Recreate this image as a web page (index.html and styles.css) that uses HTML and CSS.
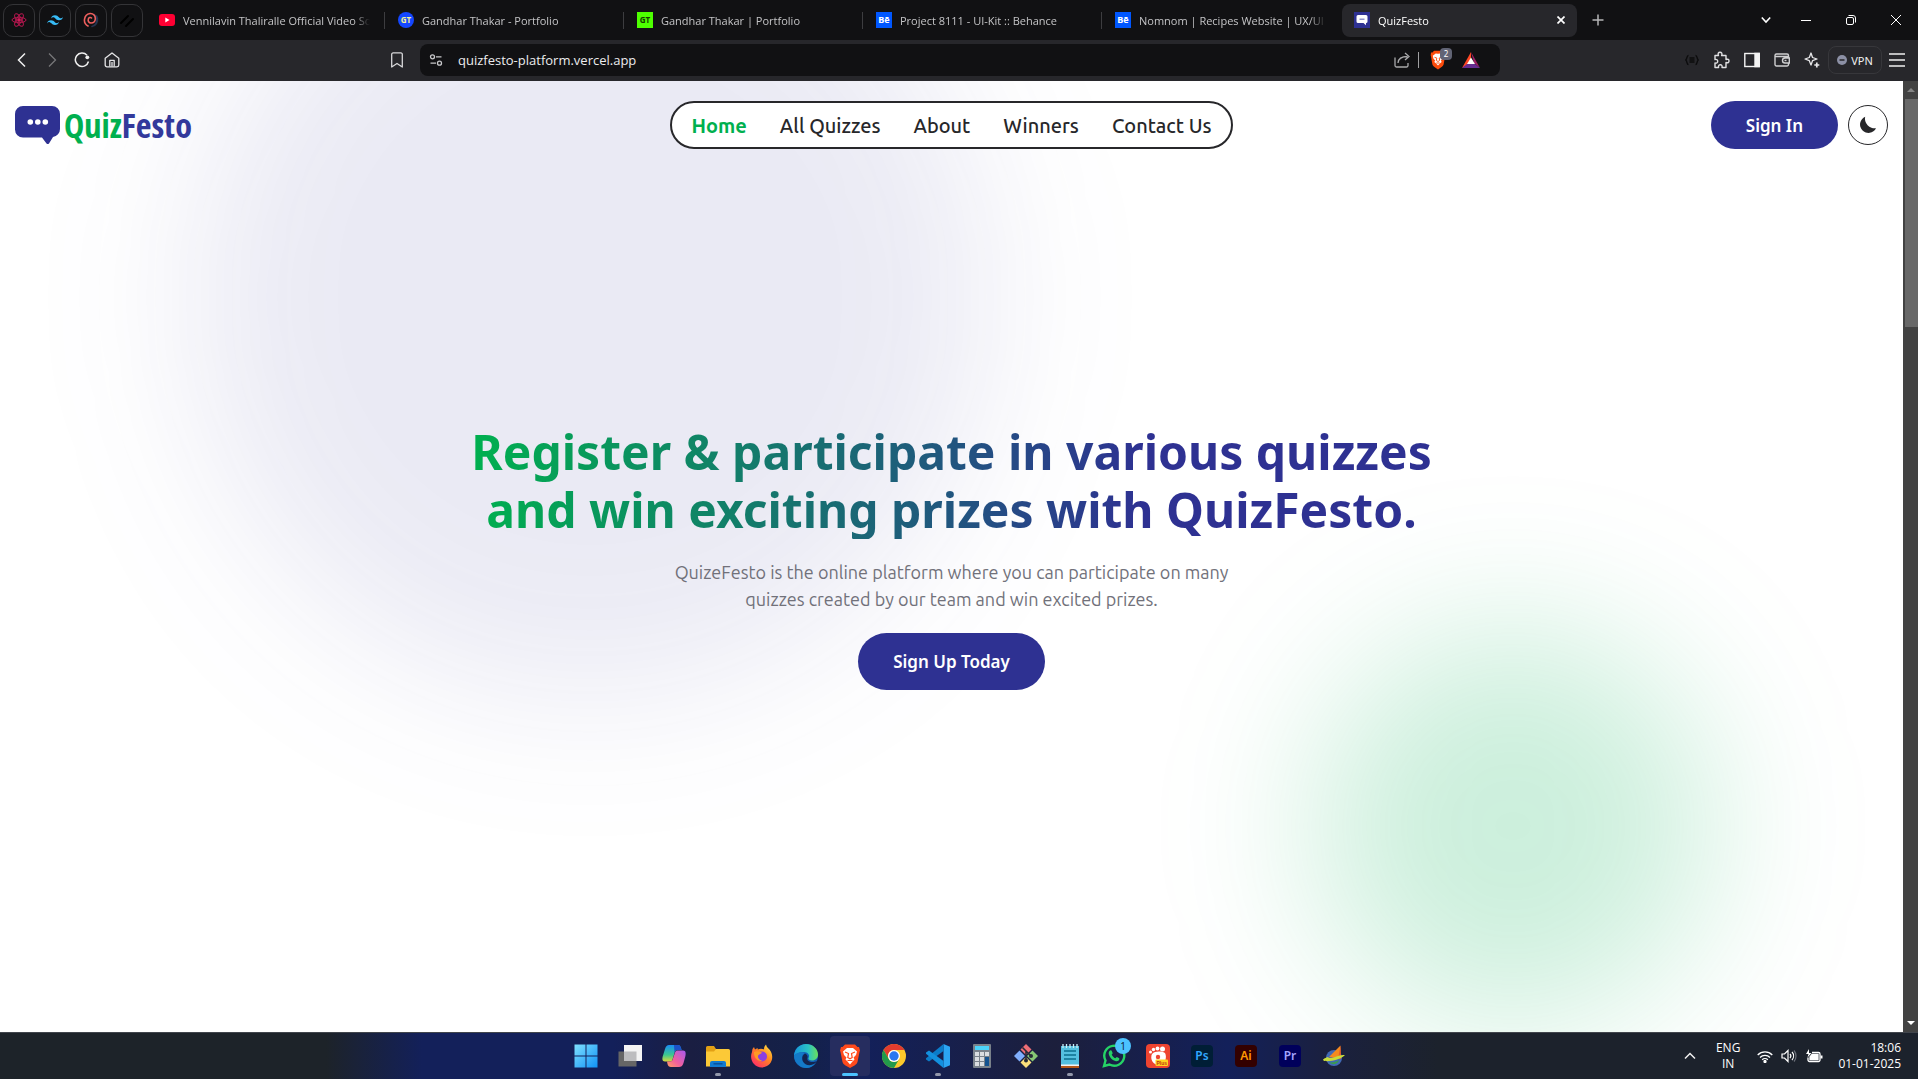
FILE: index.html
```html
<!DOCTYPE html>
<html lang="en">
<head>
<meta charset="utf-8">
<meta name="viewport" content="width=device-width, initial-scale=1">
<title>QuizFesto</title>
<link rel="stylesheet" href="styles.css">
</head>
<body>
<div class="tabstrip">
  <button class="pin" aria-label="React Icons"><svg width="16" height="16" viewBox="0 0 16 16" fill="none" stroke="#b5174f" stroke-width="1"><ellipse cx="8" cy="8" rx="7" ry="2.7"/><ellipse cx="8" cy="8" rx="7" ry="2.7" transform="rotate(60 8 8)"/><ellipse cx="8" cy="8" rx="7" ry="2.7" transform="rotate(120 8 8)"/><circle cx="8" cy="8" r="1.4" fill="#e91e63"/></svg></button>
  <button class="pin" aria-label="Tailwind CSS"><svg width="16" height="16" viewBox="0 0 24 24" fill="#38bdf8"><path d="M12 5c-3.200 0-5.200 1.600-6 4.800 1.200-1.600 2.600-2.200 4.200-1.800.9.200 1.600.9 2.300 1.700C13.700 10.900 15.100 12.300 18 12.300c3.200 0 5.200-1.600 6-4.800-1.200 1.600-2.600 2.200-4.200 1.800-.9-.2-1.600-.9-2.300-1.700C16.300 6.400 14.900 5 12 5zM6 12.300c-3.200 0-5.200 1.600-6 4.800 1.200-1.600 2.600-2.200 4.200-1.800.9.200 1.600.9 2.300 1.700C7.700 18.200 9.100 19.600 12 19.600c3.200 0 5.200-1.600 6-4.800-1.200 1.600-2.600 2.200-4.200 1.800-.9-.2-1.600-.9-2.300-1.700C10.300 13.700 8.900 12.300 6 12.300z"/></svg></button>
  <button class="pin" aria-label="Swirl"><svg width="16" height="16" viewBox="0 0 16 16" fill="none" stroke-width="1.600" stroke-linecap="round"><path d="M9 14.500A6.800 6.800 0 0 0 11 2.500M13.500 4a7 7 0 0 1-2 9.500" stroke="#26344f"/><path d="M5 14A6.700 6.700 0 0 1 7 1.500c3.500-.2 5.500 2.500 5.300 5.500-.2 2.500-2 4-4.300 4-2.200-.2-3.200-2-2.700-3.800C5.700 5.500 7.500 5 8.500 6" stroke="#f0605f"/></svg></button>
  <button class="pin" aria-label="Shadcn UI"><svg width="16" height="16" viewBox="0 0 16 16" stroke="#000" stroke-width="2" stroke-linecap="round"><path d="M2 11l7-7M7 14l7-7"/></svg></button>
  <div class="tabs">
    <a class="tab" href="#"><svg width="16" height="16" viewBox="0 0 16 16"><rect y="2" width="16" height="12" rx="3" fill="#ff0033"/><path d="M6.300 5.500v5l4.200-2.500z" fill="#fff"/></svg><span class="tab-title">Vennilavin Thaliralle Official Video Song</span></a>
    <a class="tab" href="#"><span class="fav fav-round">GT</span><span class="tab-title">Gandhar Thakar - Portfolio</span></a>
    <a class="tab" href="#"><span class="fav fav-green">GT</span><span class="tab-title">Gandhar Thakar | Portfolio</span></a>
    <a class="tab" href="#"><span class="fav fav-be">Bē</span><span class="tab-title">Project 8111 - UI-Kit :: Behance</span></a>
    <a class="tab" href="#"><span class="fav fav-be">Bē</span><span class="tab-title">Nomnom | Recipes Website | UX/UI Design</span></a>
    <a class="tab tab-active" href="#"><svg width="16" height="16" viewBox="0 0 16 16"><rect width="16" height="16" fill="#2e3192"/><path d="M4 3h8a1.500 1.500 0 0 1 1.500 1.500v5A1.500 1.500 0 0 1 12 11v2.200L9.500 11H4a1.500 1.500 0 0 1-1.500-1.500v-5A1.500 1.500 0 0 1 4 3z" fill="#fff"/><path d="M5.500 7.200h5" stroke="#7779bd" stroke-width="1.200"/></svg><span class="tab-title">QuizFesto</span><svg width="8" height="8" viewBox="0 0 8 8" stroke="#fff" stroke-width="1.700"><path d="M.5.500l7 7M7.500.500l-7 7"/></svg></a>
  </div>
  <button class="plain new-tab" aria-label="New tab"><svg width="12" height="12" viewBox="0 0 12 12" stroke="#b5b5b7" stroke-width="1.500"><path d="M6 .5v11M.5 6h11"/></svg></button>
  <div class="window-controls">
    <button class="plain caret" aria-label="Search tabs"><svg width="10" height="8" viewBox="0 0 10 8" fill="none" stroke="#fff" stroke-width="1.600"><path d="M.8 1.500L5 6l4.200-4.500"/></svg></button>
    <button class="plain win" aria-label="Minimise"><svg width="10" height="10" viewBox="0 0 10 10"><path d="M0 5.500h10" stroke="#fff"/></svg></button>
    <button class="plain win" aria-label="Restore"><svg width="10" height="10" viewBox="0 0 10 10" fill="none" stroke="#fff"><rect x=".5" y="2.500" width="7" height="7" rx="1.500"/><path d="M2.500.500H7A2.500 2.500 0 0 1 9.500 3v4.500"/></svg></button>
    <button class="plain win" aria-label="Close"><svg width="10" height="10" viewBox="0 0 10 10" stroke="#fff"><path d="M0 0l10 10M10 0L0 10"/></svg></button>
  </div>
</div>

<div class="toolbar">
  <div class="tools">
    <button class="plain tool" aria-label="Back"><svg width="16" height="16" viewBox="0 0 16 16" fill="none" stroke="#f0f0f0" stroke-width="1.500"><path d="M11 1.500L4.500 8l6.500 6.500"/></svg></button>
    <button class="plain tool" aria-label="Forward"><svg width="16" height="16" viewBox="0 0 16 16" fill="none" stroke="#77777a" stroke-width="1.300"><path d="M5 1.500L11.500 8 5 14.500"/></svg></button>
    <button class="plain tool" aria-label="Reload"><svg width="16" height="16" viewBox="0 0 16 16" fill="none" stroke="#f0f0f0" stroke-width="1.500"><path d="M13 3.200A6.700 6.700 0 1 0 14.500 9.500"/><circle cx="13.300" cy="5.300" r="1.900" fill="#f0f0f0" stroke="none"/></svg></button>
    <button class="plain tool" aria-label="Home"><svg width="16" height="16" viewBox="0 0 16 16" fill="none" stroke="#e4e4e6" stroke-width="1.300" stroke-linejoin="round"><path d="M1.200 6.300L8 1l6.800 5.300V13a1.800 1.800 0 0 1-1.800 1.800H3A1.800 1.800 0 0 1 1.200 13z"/><path d="M5.800 14.500V8.300h4.400v6.200M8 10v4.500"/></svg></button>
    <button class="plain tool tool-end" aria-label="Bookmark"><svg width="16" height="16" viewBox="0 0 16 16" fill="none" stroke="#d8d8da" stroke-width="1.300" stroke-linejoin="round"><path d="M2.700 2.500A1.500 1.500 0 0 1 4.200.8h7.600a1.500 1.500 0 0 1 1.500 1.700V15L8 11.500 2.700 15z"/></svg></button>
  </div>
  <div class="omnibox">
    <svg width="14" height="14" viewBox="0 0 14 14" fill="none" stroke="#c8c8ca" stroke-width="1.300"><circle cx="3.500" cy="3.800" r="2"/><path d="M7 3.800h5.500M1.500 10.200H7"/><circle cx="10.500" cy="10.200" r="2"/></svg>
    <input class="url" type="text" aria-label="Address" value="quizfesto-platform.vercel.app">
    <svg width="16" height="16" viewBox="0 0 16 16" fill="none" stroke="#a9a9ab" stroke-width="1.300"><path d="M1 5.500v8a1.500 1.500 0 0 0 1.500 1.500h10a1.500 1.500 0 0 0 1.500-1.500V11M4 11c.3-4.500 3-6.500 9.500-6.500M11 1l4 3.500L11 8"/></svg>
    <span class="divider"></span>
    <span class="shield"><svg width="16" height="20" viewBox="0 0 16 20"><path d="M4 .8h8l1.500 1.700 1.500 0 .3 3-.3 1-1.400 8c-.3 1-1 1.700-1.700 2.300L8 19.500l-3.900-2.700c-.7-.6-1.400-1.300-1.700-2.300L1 6.500l-.3-1 .3-3h1.500z" fill="#fb4b0b"/><path d="M8 3.800l2.300-.4 2.900 2.400-.6 2.700-1.700 2 .8 1.500-1.600 1.300L8 15.500l-2.100-2.200L4.300 12l.8-1.500-1.700-2-.6-2.700 2.900-2.400z" fill="#fff"/><path d="M4.500 7.300l2.300.7-.5 2.500L8 11.500l1.700-1-.5-2.500 2.300-.7M6.300 13h3.400" fill="none" stroke="#fb4b0b" stroke-width=".9"/></svg><span class="shield-count">2</span></span>
    <svg width="18" height="16" viewBox="0 0 18 16"><path d="M9 0L0 16l9-5z" fill="#ff4724"/><path d="M9 0l9 16-6-5z" fill="#9e1f63"/><path d="M0 16h18l-5-4H5z" fill="#662d91"/><path d="M9 5.500l4 6.500H5z" fill="#fff"/></svg>
  </div>
  <div class="extensions">
    <button class="plain tool" aria-label="JSON viewer"><svg width="14" height="12" viewBox="0 0 14 12" fill="none" stroke="#0c0c0d" stroke-width="1.400"><path d="M3.500 1.500c-2 0-1 3-2.700 4.500 1.700 1.500.7 4.500 2.700 4.500M10.500 1.500c2 0 1 3 2.700 4.500-1.700 1.500-.7 4.500-2.700 4.500M4.500 4h5M4.500 6h5M4.500 8h5"/></svg></button>
    <button class="plain tool" aria-label="Extensions"><svg width="18" height="18" viewBox="0 0 18 18" fill="none" stroke="#e0e0e2" stroke-width="1.400" stroke-linejoin="round"><path d="M2 4.500h3.500C4.500 2.500 5.500 1.200 7 1.200s2.600 1.300 1.600 3.300H13v4c2-.8 3 .2 3 1.500s-1 2.300-3 1.500v5H9c.5-2-.5-2.800-1.700-2.800s-2.200.8-1.700 2.800H2V12c1.800.5 2.700-.6 2.700-1.800S3.800 8 2 8.500z"/></svg></button>
    <button class="plain tool" aria-label="Sidebar"><svg width="16" height="16" viewBox="0 0 16 16" fill="none" stroke="#f4f4f4" stroke-width="1.400"><rect x=".8" y="1.500" width="14.400" height="13"/><path d="M11 1.500h4.200v13H11z" fill="#f4f4f4"/></svg></button>
    <button class="plain tool" aria-label="Wallet"><svg width="16" height="16" viewBox="0 0 16 16" fill="none" stroke="#cfcfd1" stroke-width="1.400"><path d="M14.500 6V3.500A1.500 1.500 0 0 0 13 2H2.500A1.500 1.500 0 0 0 1 3.500v9A1.500 1.500 0 0 0 2.500 14H13a1.500 1.500 0 0 0 1.500-1.500V11M1.500 4.500h13M15.300 6H11a2.500 2.500 0 0 0 0 5h4.300z"/><path d="M10.500 8.500h2"/></svg></button>
    <button class="plain tool" aria-label="Leo AI"><svg width="16" height="16" viewBox="0 0 16 16" fill="none" stroke="#e6e6e8" stroke-width="1.300" stroke-linejoin="round"><path d="M7 1l1.500 4.500L13 7 8.500 8.700 7 13 5.300 8.700 1 7l4.300-1.500z"/><path d="M12.800 10.500v5M10.300 13h5" stroke-width="1.700"/></svg></button>
    <button class="plain vpn"><svg width="10" height="10" viewBox="0 0 10 10"><circle cx="5" cy="5" r="5" fill="#8c90a5"/><path d="M2.500 5h5" stroke="#26262a" stroke-width="1.500"/></svg>VPN</button>
    <button class="plain tool" aria-label="Menu"><svg width="16" height="14" viewBox="0 0 16 14" stroke="#f0f0f0" stroke-width="1.400"><path d="M0 1h16M0 7h16M0 13h16"/></svg></button>
  </div>
</div>

<div class="viewport">
  <div class="page">
    <div class="glow glow-indigo"></div>
    <div class="glow glow-green"></div>
    <header class="site-header">
      <a class="logo" href="#"><svg width="46" height="38" viewBox="0 0 46 38"><path d="M8 0h29a8 8 0 0 1 8 8v15a8 8 0 0 1-7 8l-4 6.500q-1.200 1-2.500 0L27 31.500H8a8 8 0 0 1-8-8V8a8 8 0 0 1 8-8z" fill="#2e3192"/><g fill="#fff"><circle cx="15.300" cy="16" r="2.800"/><circle cx="22.800" cy="16" r="2.800"/><circle cx="30.300" cy="16" r="2.800"/></g></svg><span class="wordmark"><span class="wordmark-quiz">Quiz</span>Festo</span></a>
      <nav class="site-nav">
        <a class="current" href="#">Home</a>
        <a href="#">All Quizzes</a>
        <a href="#">About</a>
        <a href="#">Winners</a>
        <a href="#">Contact Us</a>
      </nav>
      <div class="account">
        <button class="btn btn-header">Sign In</button>
        <button class="theme" aria-label="Dark mode"><svg width="18" height="18" viewBox="0 0 18 18"><path d="M6.200.8A8.400 8.400 0 1 0 17 12.200 9.500 9.500 0 0 1 6.200.8z" fill="#27272a"/></svg></button>
      </div>
    </header>
    <main class="hero">
      <h1>Register &amp; participate in various quizzes<br>and win exciting prizes with QuizFesto.</h1>
      <p>QuizeFesto is the online platform where you can participate on many<br>quizzes created by our team and win excited prizes.</p>
      <button class="btn btn-hero">Sign Up Today</button>
    </main>
  </div>
  <div class="scrollbar">
    <svg class="arrow" width="15" height="18" viewBox="0 0 15 18"><path d="M8 7l4 4H4z" fill="#858585"/></svg>
    <span class="thumb"></span>
    <svg class="arrow arrow-end" width="15" height="18" viewBox="0 0 15 18"><path d="M4 7h8l-4 4z" fill="#fff"/></svg>
  </div>
</div>

<div class="taskbar">
  <div class="apps">
    <button class="app" aria-label="Start"><svg width="24" height="24" viewBox="0 0 24 24"><defs><linearGradient id="win" x1="0" y1="0" x2="1" y2="1"><stop offset="0" stop-color="#7fe0ff"/><stop offset="1" stop-color="#1092f5"/></linearGradient></defs><path d="M.5.500h11v11H.5zM12.500.500h11v11h-11zM.5 12.500h11v11H.5zM12.500 12.500h11v11h-11z" fill="url(#win)"/></svg></button>
    <button class="app" aria-label="Task view"><svg width="24" height="24" viewBox="0 0 24 24"><path d="M.5 7.500h18v15H.5z" fill="#666"/><path d="M6 1h18v16H6z" fill="#f4f4f4"/><path d="M6 7.500h12.500V17H6z" fill="#bdbdbf"/></svg></button>
    <button class="app" aria-label="Copilot"><svg width="24" height="24" viewBox="0 0 24 24"><defs><linearGradient id="cpa" x1="0" y1="0" x2="0" y2="1"><stop offset="0" stop-color="#1a8cf5"/><stop offset=".6" stop-color="#3cc78f"/><stop offset="1" stop-color="#d8d83c"/></linearGradient><linearGradient id="cpb" x1="1" y1="0" x2="0" y2="1"><stop offset="0" stop-color="#a858ee"/><stop offset=".6" stop-color="#f0609c"/><stop offset="1" stop-color="#ffa060"/></linearGradient></defs><path d="M7 1h9c2 0 2.500 1.500 3 3l.5 2h-4c-2 0-2.500 1-3 3l-2 6.500c-.5 1.500-1 2-3 2H3c-3 0-3-3-2-6L3 5c1-3 2-4 4-4z" fill="url(#cpa)"/><path d="M12 1h4c2 0 2.500 1.500 3 3l.5 2h-4c-1.500 0-2.500 0-3 3z" fill="#1c52c9"/><path d="M17 23H9c-2 0-3-1-3.500-3L5 17.500h3c2 0 2.500-1 3-3L13 8.500c.5-1.500 1.500-2 3-2h5c3 0 3 3 2.300 6L21.500 19c-1 3-2.500 4-4.500 4z" fill="url(#cpb)"/></svg></button>
    <button class="app app-open" aria-label="File Explorer"><svg width="24" height="24" viewBox="0 0 24 24"><path d="M0 3.500A1.500 1.500 0 0 1 1.500 2H8l2 3v4H0z" fill="#e2a015"/><path d="M0 7.500h8l2-2.500h12.500A1.500 1.500 0 0 1 24 6.500v16H0z" fill="#fcc937"/><path d="M4 23v-4a2 2 0 0 1 2-2h12a2 2 0 0 1 2 2v4z" fill="#117ad1"/><path d="M7.500 19.800h9" stroke="#0a4b94" stroke-width="1.300"/></svg></button>
    <button class="app" aria-label="Firefox"><svg width="24" height="24" viewBox="0 0 24 24"><defs><linearGradient id="ff" x1="1" y1="0" x2=".2" y2="1"><stop offset="0" stop-color="#fff24a"/><stop offset=".45" stop-color="#ff8a1f"/><stop offset="1" stop-color="#ff2a6a"/></linearGradient></defs><path d="M2.500 5L4 3l1 2.500L7.500 4l.3 1.500C10 4.500 12 4.500 14 5.500c0-2 .5-3.500 2-5 .5 3 3 4 4.500 6.500 4 6.500 1 16-8.500 16.500C3.500 23.500-1 15 2 8z" fill="url(#ff)"/><circle cx="12" cy="12.500" r="5" fill="#8a3fe0"/><path d="M4 8c3-2 6 0 8 .5-1 2-4 1.500-4 4 0 2.500 2.500 4 5 4-5 2-9.500-3-9-8.500z" fill="#ff9a24"/></svg></button>
    <button class="app" aria-label="Edge"><svg width="24" height="24" viewBox="0 0 24 24"><defs><linearGradient id="edge" x1="0" y1=".5" x2="1" y2=".5"><stop offset="0" stop-color="#1695dc"/><stop offset=".6" stop-color="#2bc4c4"/><stop offset="1" stop-color="#6be05a"/></linearGradient></defs><circle cx="12" cy="12" r="12" fill="#1260b5"/><path d="M0 11.500C.5 5 5.500 0 12 0c7 0 12 5 12 10.500 0 3.500-2.500 6-6 6-2.500 0-4-1-3.500-2.500 2-3-1-6-4.500-6-5 0-8 2-10 3.500z" fill="url(#edge)"/><path d="M0 11.500C3 8 8 7.500 11 9c-3 1-4 5-2 8.500 2 4 7 4.500 12.500 1.500-4 6-12 6.500-17 2C1.500 18.500 0 15 0 11.500z" fill="#147ac8"/><path d="M9 17.500C7.500 14 8.500 11 11 9.500c2 1 3 2.500 2.500 4.500-1 2 1.500 4 5 4 2 0 3.500-.5 5-1.500C20 22.500 11.500 22.500 9 17.500z" fill="#14254f"/></svg></button>
    <button class="app app-open app-focused" aria-label="Brave"><svg width="22" height="24" viewBox="0 0 22 24"><path d="M6 .5h10L18.500 3H20l1 3.500-.5 1.500-2 10c-.5 1.500-1.500 2.500-2.500 3.200L11 24l-5-2.800C5 20.500 4 19.500 3.500 18l-2-10L1 6.500 2 3h1.500z" fill="#ff4a1c"/><path d="M8 4h6l4 3.500-1 3.500-2.500 2.500 1 2-2 2-2.500 3-2.500-3-2-2 1-2L5 11 4 7.500z" fill="#fff"/><path d="M6 8l3.500 1.500-.7 4 2.200 1.200 2.200-1.200-.7-4L16 8M8.500 16.500h5" fill="none" stroke="#ff4a1c" stroke-width="1.200"/></svg></button>
    <button class="app" aria-label="Chrome"><svg width="24" height="24" viewBox="0 0 24 24"><circle cx="12" cy="12" r="12" fill="#fcc92b"/><path d="M1.600 6A12 12 0 0 1 22.400 6H12a6 6 0 0 0-5.200 9z" fill="#e23b2e"/><path d="M1.600 6A12 12 0 0 0 12 24l5.200-9A6 6 0 0 1 6.800 15z" fill="#229a4b"/><circle cx="12" cy="12" r="6" fill="#fff"/><circle cx="12" cy="12" r="4.700" fill="#2a78f0"/></svg></button>
    <button class="app app-open" aria-label="Visual Studio Code"><svg width="24" height="24" viewBox="0 0 24 24"><path d="M17.500 0L24 2.800v18.400L17.500 24z" fill="#2ba5f2"/><path d="M17.500 0v7L3 17.500 0 15.500v-1.200z" fill="#0b7cc9"/><path d="M17.500 24v-7L3 6.500 0 8.500v1.200z" fill="#1390de"/></svg></button>
    <button class="app" aria-label="Calculator"><svg width="18" height="24" viewBox="0 0 18 24"><rect width="18" height="24" rx="1" fill="#79818a"/><path d="M2 2h14v4H2z" fill="#4cd3fa"/><path d="M2 8h4v4H2zM7 8h4v4H7zM12 8h4v4h-4zM2 13h4v4H2zM7 13h4v4H7zM2 18h4v4H2zM7 18h4v4H7z" fill="#dadde0"/><path d="M12 13h4v9h-4z" fill="#14528f"/></svg></button>
    <button class="app" aria-label="Git"><svg width="24" height="24" viewBox="0 0 24 24"><path d="M12 0l5.500 5.500L12 11 6.500 5.500z" fill="#ee6d75"/><path d="M5.500 6.500L11 12l-5.500 5.500L0 12z" fill="#80aefc"/><path d="M18.500 6.500L24 12l-5.500 5.500L13 12z" fill="#86c774"/><path d="M12 13l5.500 5.500L12 24l-5.500-5.500z" fill="#fbdf7b"/><path d="M8.500 3.500L12 7v9M12 7l4.500 4.500" fill="none" stroke="#262b36" stroke-width="1.600"/><circle cx="12" cy="16.500" r="2" fill="#262b36"/><circle cx="17" cy="12" r="2" fill="#262b36"/></svg></button>
    <button class="app app-open" aria-label="Notepad"><svg width="20" height="24" viewBox="0 0 20 24"><path d="M1 21h18v3H1z" fill="#b5591a"/><path d="M1 20h18v2H1z" fill="#f4f4f4"/><path d="M1 2h18v18.500H1z" fill="#54c0e0"/><path d="M3 0v4M6.500 0v4M10 0v4M13.500 0v4M17 0v4" stroke="#c8eef8" stroke-width="1.300"/><path d="M4 7h12M4 11h12M4 15h12" stroke="#0b6f8f" stroke-width="1.600"/></svg></button>
    <button class="app" aria-label="WhatsApp"><svg width="24" height="24" viewBox="0 0 24 24"><path d="M2 22l1.500-5.500a10 10 0 1 1 4 4z" fill="none" stroke="#25d366" stroke-width="2.400"/><path d="M7.500 7c1-1 2-.8 2.500.5l.7 1.700-1 1.500c.8 1.600 2 2.800 3.600 3.500l1.500-1.200 2.500 1.200c.5 2-1.500 3.300-3.300 3C10.500 16.500 7 13 6.700 9.500c0-1 .3-2 .8-2.500z" fill="#25d366"/></svg><span class="badge">1</span></button>
    <button class="app" aria-label="GOM Player Plus"><svg width="24" height="24" viewBox="0 0 24 24"><rect width="24" height="24" rx="4" fill="#ee4430"/><g fill="#fff"><circle cx="4.500" cy="8" r="1.500"/><circle cx="7.500" cy="5.500" r="1.700"/><circle cx="11.500" cy="4.500" r="1.900"/><circle cx="16.500" cy="5" r="2.500"/><path d="M6 10c3-3 9-3 13-1 2 3 1 12-6 12S4 14 6 10z"/></g><circle cx="12" cy="13" r="2.200" fill="#ee4430"/><rect x="9.500" y="15.500" width="12.500" height="6.500" rx="1" fill="#ffd21f"/><text x="10.500" y="21" font-family="Liberation Sans" font-size="5" font-weight="700" fill="#c23a10">Plus</text></svg></button>
    <button class="app" aria-label="Photoshop"><span class="adobe adobe-ps">Ps</span></button>
    <button class="app" aria-label="Illustrator"><span class="adobe adobe-ai">Ai</span></button>
    <button class="app" aria-label="Premiere Pro"><span class="adobe adobe-pr">Pr</span></button>
    <button class="app" aria-label="Download Manager"><svg width="24" height="24" viewBox="0 0 24 24"><circle cx="12" cy="14" r="8" fill="#4169b5"/><path d="M18.500 1.500L7 13l11.500 2z" fill="#f58a1f"/><path d="M18.500 1.500L16 15h3z" fill="#e65a2a"/><path d="M1 16c2 3 18 0 22-5-1 0-5 0-7 1-5 2-9 3-10 1-2 .5-5 2-5 3z" fill="#c9dc3a"/><path d="M7 18c3 1 7 0 10-2-1 4-6 6-10 2z" fill="#3a9c4c"/></svg></button>
  </div>
  <div class="tray">
    <svg class="tray-caret" width="12" height="8" viewBox="0 0 12 8" fill="none" stroke="#f0f0f0" stroke-width="1.500"><path d="M1 6.500l5-5 5 5"/></svg>
    <div class="language">ENG<br>IN</div>
    <div class="status">
      <svg width="16" height="13" viewBox="0 0 16 13" fill="none" stroke="#fff" stroke-width="1.300"><path d="M.7 5a10.300 10.300 0 0 1 14.600 0M3 7.500a7.100 7.100 0 0 1 10 0M5.200 9.800a4 4 0 0 1 5.600 0"/><circle cx="8" cy="11.500" r="1" fill="#fff"/></svg>
      <svg width="16" height="14" viewBox="0 0 16 14" fill="none" stroke="#fff" stroke-width="1.200"><path d="M1 5h2.500L7 1.500v11L3.500 9H1zM9 5a3 3 0 0 1 0 4M11 3a6 6 0 0 1 0 8"/><path d="M13 1.500a8.500 8.500 0 0 1 0 11" stroke="#6a6f78"/></svg>
      <svg width="18" height="14" viewBox="0 0 18 14" fill="none" stroke="#fff" stroke-width="1.300"><path d="M7 3.500h6.500A1.500 1.500 0 0 1 15 5v6a1.500 1.500 0 0 1-1.500 1.500h-9A1.500 1.500 0 0 1 3 11V8.500"/><path d="M7 5.500h6v5H5V8z" fill="#fff"/><path d="M16.500 6.500v3" stroke-width="2"/><path d="M4 0L1 5h2.500L2.500 8.500 6.500 4H4z" fill="#fff" stroke="none"/></svg>
    </div>
    <div class="clock">18:06<br>01-01-2025</div>
  </div>
</div>
</body>
</html>
```
FILE: styles.css
```css
* { box-sizing: border-box; }

body {
  margin: 0;
  min-height: 100vh;
  display: flex;
  flex-direction: column;
  font-family: "Noto Sans", sans-serif;
  background: #fff;
  color: #27272a;
}

a { color: inherit; text-decoration: none; }
button { font: inherit; color: inherit; cursor: pointer; padding: 0; }
svg { display: block; flex: none; }

.plain {
  border: 0;
  background: none;
  display: flex;
  align-items: center;
  justify-content: center;
}

/* Browser tabs */
.tabstrip {
  display: flex;
  align-items: center;
  gap: 4px;
  height: 40px;
  padding-left: 3px;
  background: #111113;
  font-family: "Open Sans", sans-serif;
  font-size: 11px;
}
.pin {
  flex: none;
  width: 32px;
  height: 33px;
  display: grid;
  place-items: center;
  border: 1px solid #343437;
  border-radius: 10px;
  background: none;
}
.tabs {
  flex: 0 1 1430px;
  min-width: 0;
  display: flex;
  gap: 4px;
}
.tab {
  position: relative;
  flex: 1 1 0;
  min-width: 0;
  height: 33px;
  display: flex;
  align-items: center;
  gap: 8px;
  padding: 0 12px;
  border-radius: 8px;
  color: #c4c4c6;
}
.tab:nth-child(-n+4)::after {
  content: "";
  position: absolute;
  right: -3px;
  top: 8px;
  width: 1px;
  height: 17px;
  background: #3d3d40;
}
.tab-active { background: #27272b; color: #fff; }
.tab-title {
  flex: 1;
  overflow: hidden;
  white-space: nowrap;
  mask-image: linear-gradient(to left, transparent, #000 16px);
}
.fav {
  flex: none;
  width: 16px;
  height: 16px;
  font-size: 8px;
  line-height: 16px;
  font-weight: 700;
  text-align: center;
}
.fav-round { border-radius: 50%; background: #1447ff; color: #f2f296; }
.fav-green { background: #4dff00; color: #133a00; }
.fav-be { background: #0057ff; color: #fff; font-size: 9px; }
.new-tab { width: 34px; height: 33px; }
.window-controls { display: flex; margin-left: auto; }
.caret { width: 34px; height: 40px; }
.win { width: 45px; height: 40px; }

/* Browser toolbar */
.toolbar {
  display: grid;
  grid-template-columns: 1fr minmax(0, 1080px) 1fr;
  align-items: center;
  height: 41px;
  padding: 0 0 1px 2px;
  background: #27272b;
}
.tools, .extensions { display: flex; align-items: center; }
.tools { padding: 0 8px 0 5px; }
.tool { width: 30px; height: 32px; }
.tool-end { margin-left: auto; }
.extensions { justify-content: flex-end; padding-right: 6px; }
.vpn {
  width: 54px;
  height: 28px;
  margin-left: 1px;
  gap: 4px;
  border: 1px solid #37373b;
  border-radius: 8px;
  color: #f0f0f0;
  font-size: 11px;
}
.omnibox {
  height: 32px;
  display: flex;
  align-items: center;
  gap: 8px;
  padding: 0 20px 0 9px;
  border-radius: 8px;
  background: #111113;
}
.url {
  flex: 1;
  min-width: 0;
  padding: 0 0 0 7px;
  border: 0;
  background: none;
  color: #ececee;
  font: 13px "Open Sans", sans-serif;
}
.divider { width: 1px; height: 16px; background: #a0a0a2; }
.shield { position: relative; margin: 0 8px 0 3px; }
.shield-count {
  position: absolute;
  left: 10px;
  top: -2px;
  width: 12px;
  height: 12px;
  border-radius: 4px;
  background: #616475;
  color: #fff;
  font-size: 8px;
  line-height: 12px;
  text-align: center;
}

/* Page area */
.viewport { flex: 1; display: flex; min-height: 600px; }
.page {
  position: relative;
  isolation: isolate;
  flex: 1;
  min-width: 0;
  display: flex;
  flex-direction: column;
  overflow: hidden;
}
.glow {
  position: absolute;
  z-index: -1;
  border-radius: 50%;
  filter: blur(76px);
}
.glow-indigo { left: 10%; top: -184px; width: 800px; height: 800px; background: #2e31921a; }
.glow-green { right: 10%; bottom: 6px; width: 400px; height: 400px; background: #00b04f33; }

.site-header {
  display: grid;
  grid-template-columns: 1fr auto 1fr;
  align-items: center;
  padding: 20px 15px;
}
.logo { display: flex; align-items: center; gap: 3px; }
.wordmark {
  font: 900 34px/38px "Noto Sans ExtraCondensed", "Open Sans Condensed", "Roboto Condensed", "Noto Sans Condensed", "DejaVu Sans Condensed", sans-serif;
  color: #33399b;
}
.wordmark-quiz { color: #00b04f; }
.site-nav {
  display: flex;
  align-items: center;
  gap: 33px;
  height: 48px;
  padding: 0 20px;
  border: 2px solid #27272a;
  border-radius: 24px;
  background: #fff;
  font-family: "Ubuntu", "Noto Sans", sans-serif;
  font-size: 20px;
  font-weight: 500;
}
.current { color: #00b04f; font-weight: 700; }
.account { display: flex; align-items: center; justify-content: flex-end; gap: 10px; }
.btn {
  border: 0;
  border-radius: 30px;
  background: #2e3192;
  color: #fff;
  font-weight: 600;
}
.btn-header { height: 48px; padding: 0 35px; font-size: 17px; }
.btn-hero { height: 57px; padding: 0 35px; font-size: 17px; }
.theme {
  width: 40px;
  height: 40px;
  display: grid;
  place-items: center;
  border: 1px solid #27272a;
  border-radius: 50%;
  background: #fff;
}

.hero {
  flex: 1;
  display: flex;
  flex-direction: column;
  align-items: center;
  justify-content: center;
  padding-bottom: 88px;
  text-align: center;
}
.hero h1 {
  margin: 0;
  font-size: 48px;
  line-height: 58px;
  font-weight: 700;
  color: transparent;
  background: linear-gradient(to right, #00b04f, #2e3192 70%);
  background-clip: text;
}
.hero p {
  margin: 20px 0;
  font-family: "Ubuntu", "Noto Sans", sans-serif;
  font-size: 18px;
  line-height: 27px;
  color: #71717a;
}

.scrollbar {
  display: flex;
  flex-direction: column;
  width: 15px;
  background: #424242;
}
.thumb { height: 24%; margin-left: 2px; background: #686868; }
.arrow-end { margin-top: auto; }

/* Taskbar */
.taskbar {
  display: grid;
  grid-template-columns: 1fr auto 1fr;
  align-items: center;
  height: 47px;
  padding-left: 2px;
  border-top: 1px solid #41454c;
  background: linear-gradient(to right, #1d2329 17%, #13205a 22%, #13205a 32%, #1a1e42 36%, #142149 42%, #13205a 45%, #1c1f3c 55%, #13205a 64%, #1a2040 69%, #1c222c 75%);
  color: #fff;
}
.apps { grid-column: 2; display: flex; gap: 4px; }
.app {
  position: relative;
  width: 40px;
  height: 40px;
  display: grid;
  place-items: center;
  border: 0;
  border-radius: 4px;
  background: none;
}
.app-open::after {
  content: "";
  position: absolute;
  bottom: 0;
  left: 17px;
  width: 6px;
  height: 3px;
  border-radius: 2px;
  background: #9398ab;
}
.app-focused { background: #262d5f; }
.app-focused::after { left: 12px; width: 16px; background: #4cc2ff; }
.badge {
  position: absolute;
  top: 2px;
  right: 3px;
  width: 16px;
  height: 16px;
  border-radius: 50%;
  background: #4cc2ff;
  color: #10243a;
  font-size: 10px;
  line-height: 16px;
}
.adobe {
  width: 22px;
  height: 22px;
  border-radius: 4px;
  font-size: 12px;
  line-height: 21px;
  font-weight: 600;
}
.adobe-ps { background: #001e36; color: #31a8ff; }
.adobe-ai { background: #330000; color: #ff9a00; }
.adobe-pr { background: #00005b; color: #a4a4ff; }
.tray {
  display: flex;
  align-items: center;
  justify-content: flex-end;
  padding-right: 17px;
  font-family: "Open Sans", sans-serif;
  font-size: 12px;
  line-height: 16px;
}
.tray-caret { margin-right: 20px; }
.language { text-align: center; }
.status { display: flex; align-items: center; gap: 8px; margin: 0 15px 0 17px; }
.clock { text-align: right; }
```
